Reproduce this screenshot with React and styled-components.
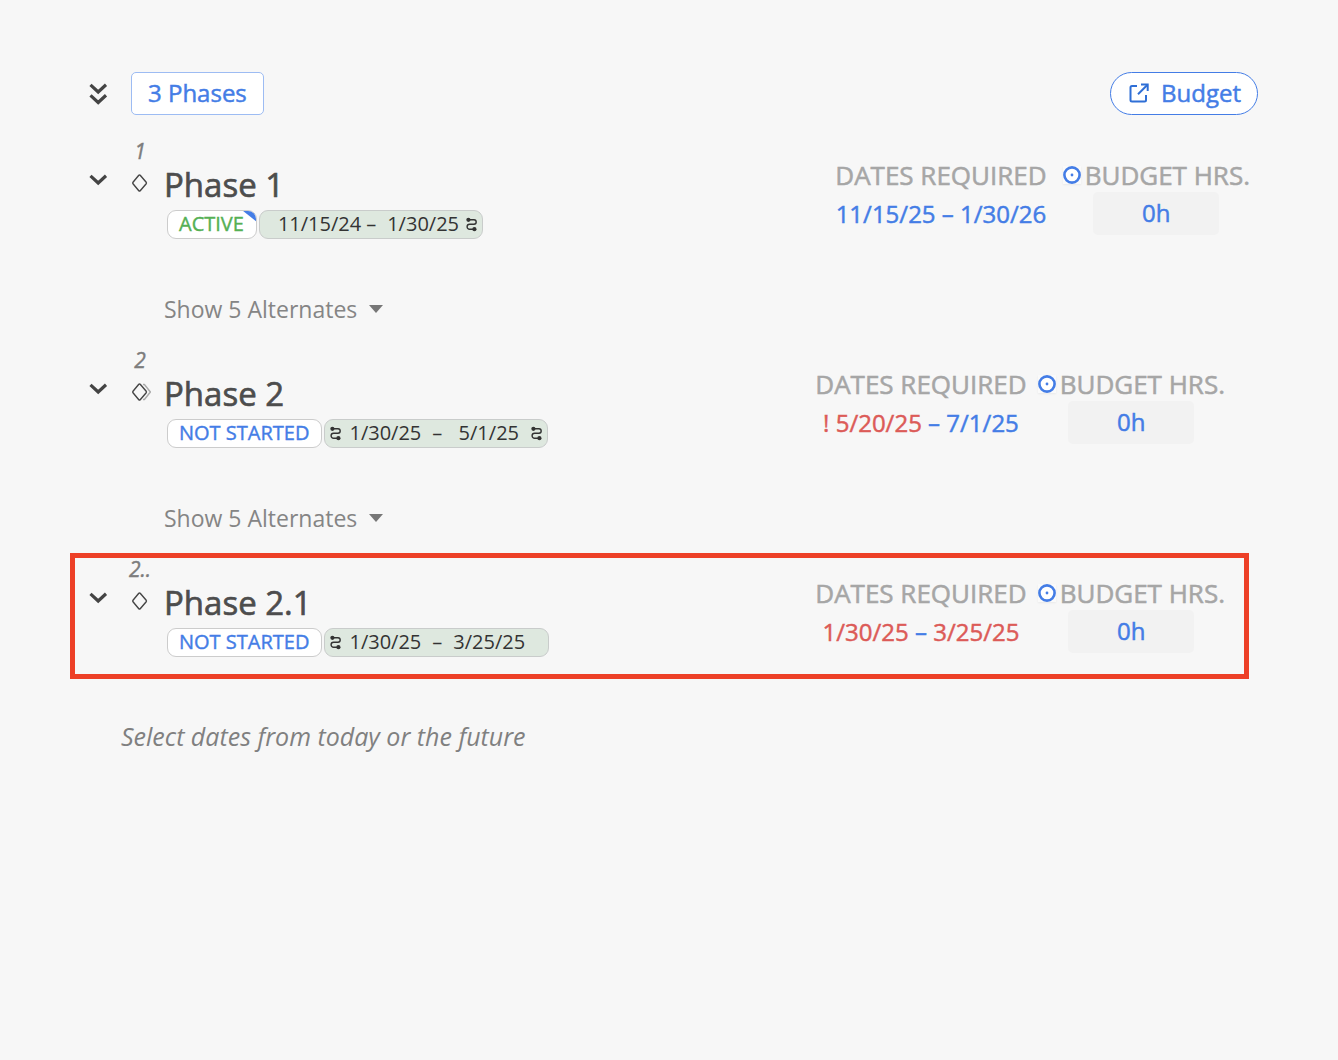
import React from 'react'
import styled, { createGlobalStyle, css } from 'styled-components'


const phases = [
    {
        id: 'p1', order: '1', name: 'Phase 1', status: 'ACTIVE', active: true, flagged: true, roomy: true,
        planned: { start: '11/15/24', end: '1/30/25', linkEnd: true, tight: true },
        required: { start: '11/15/25', end: '1/30/26' },
        budget: '0h', alternates: 5,
    },
    {
        id: 'p2', order: '2', name: 'Phase 2', status: 'NOT STARTED', stacked: true,
        planned: { start: '1/30/25', end: '5/1/25', linkStart: true, linkEnd: true },
        required: { start: '! 5/20/25', end: '7/1/25', startLate: true },
        budget: '0h', alternates: 5,
    },
    {
        id: 'p21', order: '2..', name: 'Phase 2.1', status: 'NOT STARTED', highlighted: true,
        planned: { start: '1/30/25', end: '3/25/25', linkStart: true },
        required: { start: '1/30/25', end: '3/25/25', startLate: true, endLate: true },
        budget: '0h',
    },
]


const ChevronIcon = ({ double }) => (
    <svg width="20" height={double ? 22 : 12} viewBox={double ? '0 0 20 22' : '0 0 20 12'} fill="none" stroke="#444" strokeWidth="3.2">
        <path d="M2.5 1.8 L10.2 9 L18 1.8" />
        {double ? <path d="M2.5 12.3 L10.2 19.5 L18 12.3" /> : null}
    </svg>
)

const DiamondIcon = ({ stacked }) => (
    <svg width="22" height="20" viewBox="0 0 22 20" fill="none" strokeWidth="1.4" strokeLinejoin="round">
        {stacked ? <path d="M14 2.5 L15.4 2.5 L21.4 10 L15.4 17.5 L14 17.5" stroke="#aaa" /> : null}
        <path d="M9.8 2.3 Q10.5 1.6 11.2 2.3 L17.2 9.3 Q17.7 10 17.2 10.7 L11.2 17.7 Q10.5 18.4 9.8 17.7 L4 10.7 Q3.4 10 4 9.3 Z" stroke="#444" />
    </svg>
)

const LinkIcon = () => (
    <svg width="12" height="16" viewBox="0 0 12 16" fill="none" stroke="#333" strokeWidth="1.4">
        <path d="M2 3.8 H8 A2.2 2.2 0 0 1 8 8.2 H3.6 A2.5 2.5 0 0 0 3.6 13.2 H8" />
        <circle cx="2.4" cy="3.8" r="2.1" fill="#333" stroke="none" />
        <circle cx="8.4" cy="13.2" r="2.1" fill="#333" stroke="none" />
    </svg>
)

const OpenIcon = () => (
    <svg width="20" height="20" viewBox="0 0 20 20" fill="none" stroke="#2f6fd6" strokeWidth="2">
        <path d="M8 3 H3 Q1.5 3 1.5 4.5 V17 Q1.5 18.5 3 18.5 H15.5 Q17 18.5 17 17 V12" />
        <path d="M12 1.5 H18.7 V8" />
        <path d="M18.5 1.7 L9 11.2" />
    </svg>
)

const TargetIcon = () => (
    <Target width="18" height="18" viewBox="0 0 18 18">
        <circle cx="9" cy="9" r="7.6" fill="#fff" stroke="#447de6" strokeWidth="2.6" />
        <circle cx="9" cy="9" r="1.4" fill="#447de6" />
    </Target>
)

const PlannedDates = ({ start, end, linkStart, linkEnd, tight }) => (
    <Pill>
        <StartSlot $tight={tight}>{linkStart ? <LinkIcon /> : null}</StartSlot>
        <PillDate>{start}</PillDate>
        <PillDash $tight={tight}>–</PillDash>
        <PillDate>{end}</PillDate>
        <EndSlot>{linkEnd ? <LinkIcon /> : null}</EndSlot>
    </Pill>
)

const Phase = ({ phase }) => (
    <Row $highlighted={phase.highlighted} $roomy={phase.roomy}>
        <Toggle type="button" aria-label={`Collapse ${phase.name}`}><ChevronIcon /></Toggle>
        <Marker>
            <Order>{phase.order}</Order>
            <DiamondIcon stacked={phase.stacked} />
        </Marker>
        <Main>
            <Title>{phase.name}</Title>
            <Badges>
                <Status type="button" $active={phase.active} $flagged={phase.flagged}>{phase.status}</Status>
                <PlannedDates {...phase.planned} />
            </Badges>
            {phase.alternates ? <Alternates type="button">Show {phase.alternates} Alternates <Caret /></Alternates> : null}
        </Main>
        <Facts $roomy={phase.roomy}>
            <Fact>
                <FactLabel as="span">DATES REQUIRED</FactLabel>
                <Required>
                    <RequiredDate $late={phase.required.startLate}>{phase.required.start}</RequiredDate>
                    {' – '}
                    <RequiredDate $late={phase.required.endLate}>{phase.required.end}</RequiredDate>
                </Required>
            </Fact>
            <Fact>
                <FactLabel htmlFor={`budget-${phase.id}`}><TargetIcon />BUDGET HRS.</FactLabel>
                <Hours id={`budget-${phase.id}`} type="text" defaultValue={phase.budget} />
            </Fact>
        </Facts>
    </Row>
)

const App = () => {
    return (
        <Page>
            <GlobalStyle />
            <Header>
                <HeaderToggle type="button" aria-label="Collapse all"><ChevronIcon double /></HeaderToggle>
                <PhasesButton type="button">3 Phases</PhasesButton>
                <BudgetLink href="#budget"><OpenIcon />Budget</BudgetLink>
            </Header>
            {phases.map(phase => <Phase key={phase.id} phase={phase} />)}
            <Hint>Select dates from today or the future</Hint>
        </Page>
    )
}

const GlobalStyle = createGlobalStyle`
    * { box-sizing: border-box; }
    body {
        margin: 0;
        background: #f7f7f7;
        font-family: "Open Sans", "Noto Sans", sans-serif;
    }
    button, input { font-family: inherit; }
    svg { display: block; flex: none; }
`

// Open Sans has no medium cut here, a thin stroke gives that weight
const medium = css`
    font-weight: 400;
    -webkit-text-stroke: 0.02em currentColor;
`

const Page = styled.main`
    padding: 72px 80px 40px 70px;
`

const Header = styled.header`
    display: flex;
    align-items: center;
    padding-left: 5px;
    margin-bottom: 20px;
`

const PlainButton = styled.button`
    display: flex;
    align-items: center;
    padding: 0;
    border: 0;
    background: none;
    cursor: pointer;
`

const HeaderToggle = styled(PlainButton)`
    justify-content: center;
    width: 46px;
    margin-right: 10px;
`

const PhasesButton = styled.button`
    height: 43px;
    padding: 0 16px 2px;
    border: 1px solid #9dbcf3;
    border-radius: 5px;
    background: #fff;
    color: #447de6;
    font-size: 24px;
    line-height: 39px;
    ${medium}
`

const BudgetLink = styled.a`
    display: flex;
    align-items: center;
    gap: 12px;
    height: 43px;
    margin-left: auto;
    padding: 0 16px 2px 18px;
    border: 1px solid #447de6;
    border-radius: 22px;
    background: #fff;
    color: #447de6;
    font-size: 24px;
    line-height: 39px;
    text-decoration: none;
    ${medium}
`

const Row = styled.section`
    display: flex;
    align-items: flex-start;
    margin-right: ${({ $roomy }) => $roomy ? 0 : 9}px;
    padding-right: ${({ $roomy }) => $roomy ? 3 : 19}px;
    border: 5px solid ${({ $highlighted }) => $highlighted ? '#ed4027' : 'transparent'};
`

const Toggle = styled(PlainButton)`
    justify-content: center;
    width: 46px;
    height: 80px;
`

const Marker = styled.div`
    display: flex;
    flex-direction: column;
    align-items: center;
    width: 38px;
    margin-right: 5px;
`

const Order = styled.span`
    color: #7d7d7d;
    font-size: 21px;
    font-style: italic;
    line-height: 22px;
    margin-bottom: 11px;
    ${medium}
`

const Main = styled.div`
    flex: 1;
    padding: 25px 0 17px;
`

const Title = styled.h2`
    margin: 0 0 5px;
    color: #4d4d4d;
    font-size: 33px;
    line-height: 40px;
    ${medium}
`

const Badges = styled.div`
    display: flex;
    gap: 2px;
    padding-left: 3px;
`

const Status = styled.button`
    position: relative;
    overflow: hidden;
    height: 29px;
    padding: 0 12px 2px 11px;
    border: 1px solid #ccc;
    border-radius: 9px;
    background: #fff;
    color: ${({ $active }) => $active ? '#55b054' : '#447de6'};
    font-size: 20px;
    line-height: 25px;
    ${medium}

    &::after {
        content: '';
        display: ${({ $flagged }) => $flagged ? 'block' : 'none'};
        position: absolute;
        top: -1px;
        right: -1px;
        width: 15px;
        height: 12px;
        background: #447de6;
        clip-path: polygon(0 0, 100% 0, 100% 100%);
    }
`

const Pill = styled.span`
    display: flex;
    align-items: center;
    height: 29px;
    padding: 0 5px 2px;
    border: 1px solid #c9cccb;
    border-radius: 9px;
    background: #dee8df;
    color: #333;
    font-size: 20px;
    line-height: 25px;
`

const StartSlot = styled.span`
    width: ${({ $tight }) => $tight ? 13 : 19}px;
`

const EndSlot = styled.span`
    width: 11px;
    margin-left: 7px;
`

const PillDate = styled.span`
    min-width: 71px;
    text-align: center;
`

const PillDash = styled.span`
    padding: ${({ $tight }) => $tight ? '0 11px 0 5px' : '0 11px'};
`

const Alternates = styled(PlainButton)`
    gap: 12px;
    margin-top: 57px;
    color: #858585;
    font-size: 23px;
    line-height: 26px;
`

const Caret = styled.span`
    border: 7px solid transparent;
    border-top: 8px solid #777;
    border-bottom: 0;
`

const Facts = styled.div`
    display: flex;
    gap: ${({ $roomy }) => $roomy ? 16 : 11}px;
    padding-top: 18px;
`

const Fact = styled.div`
    display: flex;
    flex-direction: column;
    align-items: center;
`

const FactLabel = styled.label`
    display: flex;
    align-items: center;
    gap: 4px;
    color: #a6a6a6;
    font-size: 26px;
    line-height: 34px;
    ${medium}
`

const Target = styled.svg`
    background: #fafafa;
    box-shadow: 0 1px 2px rgba(0, 0, 0, 0.06);
`

const Required = styled.span`
    color: #447de6;
    font-size: 24px;
    line-height: 43px;
    white-space: pre;
    ${medium}
`

const RequiredDate = styled.span`
    color: ${({ $late }) => $late ? '#dc5b58' : '#447de6'};
    -webkit-text-stroke-color: currentColor;
`

const Hours = styled.input`
    width: 126px;
    height: 43px;
    padding: 0 0 2px;
    border: 0;
    border-radius: 5px;
    background: #f2f2f2;
    color: #447de6;
    font-size: 24px;
    text-align: center;
    ${medium}
`

const Hint = styled.p`
    margin: 40px 0 0 51px;
    color: #808080;
    font-size: 25px;
    font-style: italic;
    line-height: 34px;
`

export default App
